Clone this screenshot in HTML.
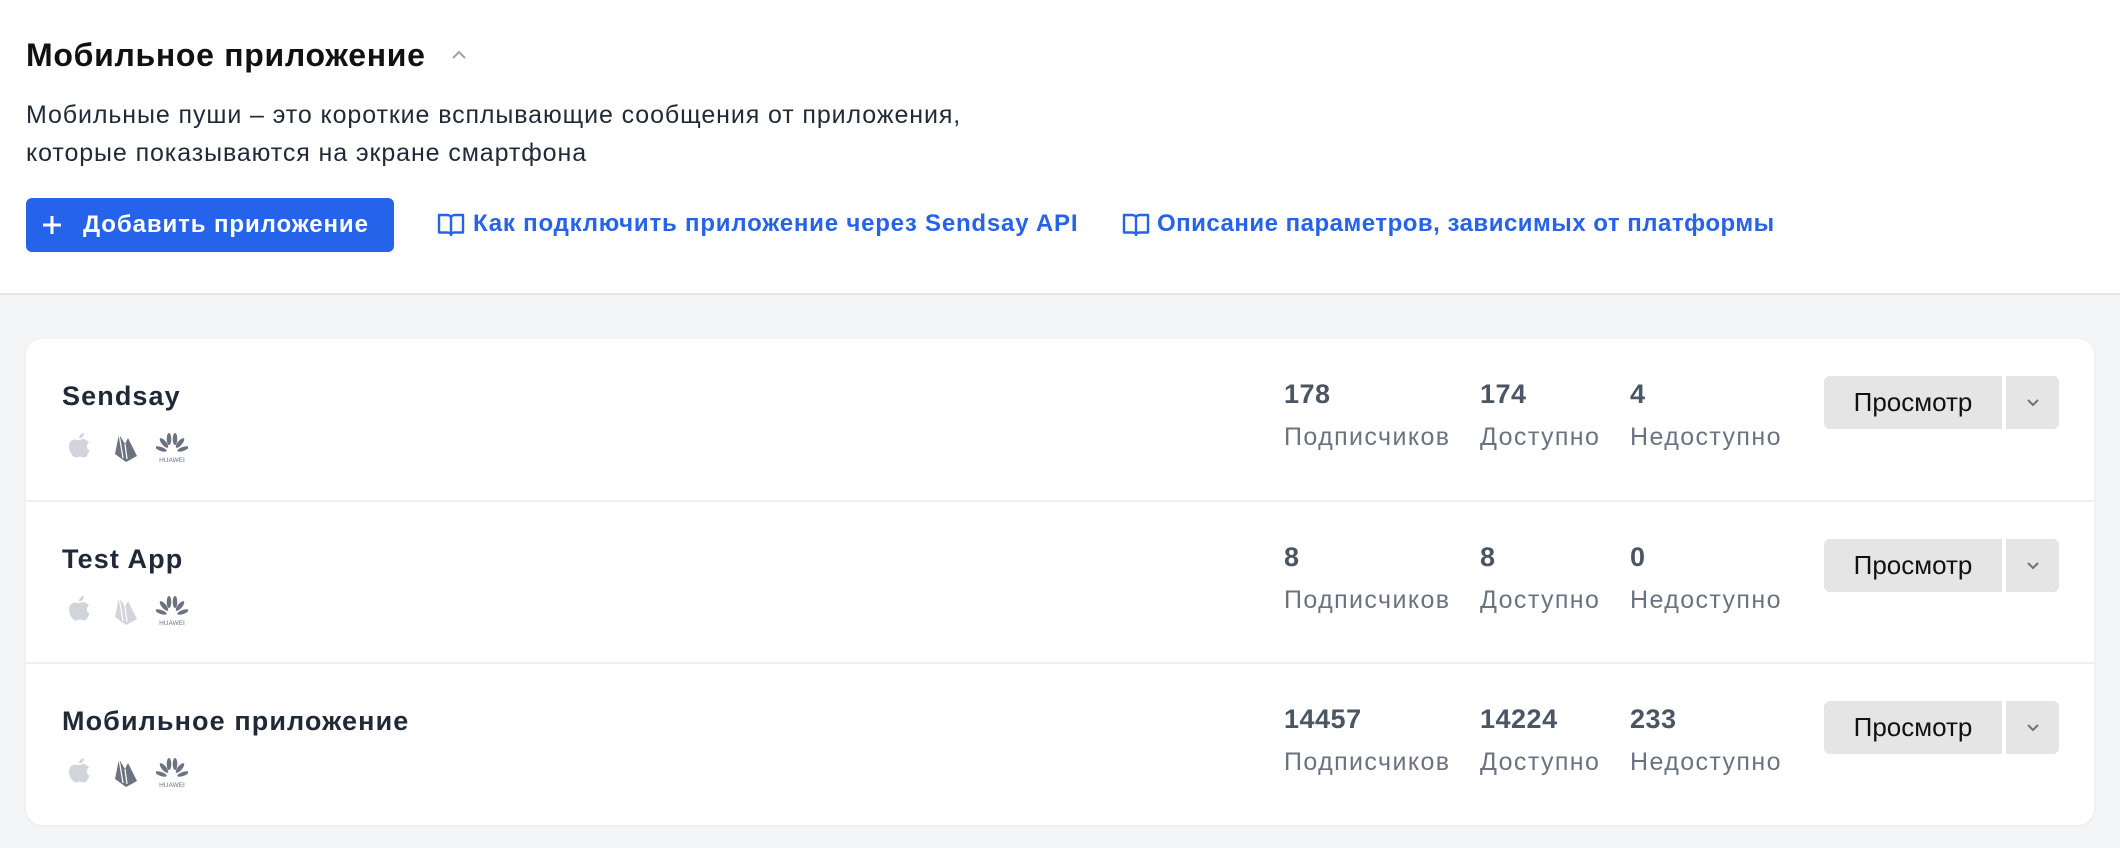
<!DOCTYPE html>
<html><head><meta charset="utf-8"><style>
*{box-sizing:border-box;margin:0;padding:0}
body{width:2120px;height:848px;background:#f4f5f7;font-family:"Liberation Sans",sans-serif;position:relative;overflow:hidden}
.top{position:absolute;left:0;top:0;width:2120px;height:295px;background:#fff;border-bottom:2px solid #e5e7eb}
.abs{position:absolute;white-space:nowrap}
h1{position:absolute;left:26px;top:37px;font-size:32px;font-weight:bold;color:#111;letter-spacing:0.7px}
.desc{left:26px;top:96px;font-size:25px;line-height:38px;color:#1f2937;letter-spacing:0.9px}
.btn{position:absolute;left:26px;top:198px;width:368px;height:54px;background:#2563eb;border-radius:6px;color:#fff;font-size:24px;font-weight:bold;display:flex;align-items:center;padding-left:57px;letter-spacing:0.9px}
.lnk{font-size:24px;font-weight:bold;color:#2563eb;top:210px}
.card{position:absolute;left:26px;top:339px;width:2068px;height:486px;background:#fff;border-radius:16px;box-shadow:0 1px 4px rgba(0,0,0,.06)}
.row{position:absolute;left:0;width:2068px;height:162px}
.row+.row{border-top:2px solid #eeeff1}
.name{position:absolute;left:36px;top:42px;font-size:27px;font-weight:bold;color:#1f2937;letter-spacing:1.1px}
.num{position:absolute;top:40px;font-size:27px;font-weight:bold;color:#4b5563;letter-spacing:0.5px}
.lab{position:absolute;top:84px;font-size:25px;color:#6b7280;letter-spacing:1.4px}
.pv{position:absolute;left:1798px;top:37px;width:178px;height:53px;background:#e5e5e5;border-radius:6px 0 0 6px;font-size:26px;color:#111;display:flex;align-items:center;justify-content:center}
.dd{position:absolute;left:1980px;top:37px;width:53px;height:53px;background:#e5e5e5;border-radius:0 6px 6px 0}
.ic{position:absolute;top:93px}
</style></head><body>
<div class="top">
<h1>Мобильное приложение</h1>
<svg class="abs" style="left:450px;top:48px" width="18" height="14" viewBox="0 0 18 14"><path d="M3 10 L9 4 L15 10" fill="none" stroke="#9ca3af" stroke-width="2"/></svg>
<div class="abs desc">Мобильные пуши – это короткие всплывающие сообщения от приложения,<br>которые показываются на экране смартфона</div>
<div class="btn"><svg style="position:absolute;left:14px;top:15px" width="24" height="24" viewBox="0 0 24 24"><path d="M12 3V21M3 12H21" stroke="#fff" stroke-width="3"/></svg>Добавить приложение</div>
<svg class="abs" style="left:437px;top:212px" width="28" height="26" viewBox="0 0 28 26"><path d="M2 3h8c2 0 4 1 4 3v17c0-1.5-1.5-2.5-3.5-2.5H2z M26 3h-8c-2 0-4 1-4 3v17c0-1.5 1.5-2.5 3.5-2.5H26z" fill="none" stroke="#2563eb" stroke-width="2.4" stroke-linejoin="round"/></svg>
<div class="abs lnk" style="left:473px;letter-spacing:0.8px">Как подключить приложение через Sendsay API</div>
<svg class="abs" style="left:1122px;top:212px" width="28" height="26" viewBox="0 0 28 26"><path d="M2 3h8c2 0 4 1 4 3v17c0-1.5-1.5-2.5-3.5-2.5H2z M26 3h-8c-2 0-4 1-4 3v17c0-1.5 1.5-2.5 3.5-2.5H26z" fill="none" stroke="#2563eb" stroke-width="2.4" stroke-linejoin="round"/></svg>
<div class="abs lnk" style="left:1157px;letter-spacing:0.5px">Описание параметров, зависимых от платформы</div>
</div>
<div class="card">
<div class="row" style="top:0">
<div class="name">Sendsay</div>
<svg class="ic" style="left:41px" width="26" height="30" viewBox="0 0 26 30"><path d="M17 1c0 3-2 5.5-5 5.5 0-3 2.5-5.5 5-5.5zM13 8c2-1 4-1.5 6 0 1.5.5 2.5 1.5 3 2.5-3 2-3 6.5.5 8-1 3-3 7-5.5 7-2 0-2.5-1-4-1s-2 1-4 1C6 25.5 2 20 2 14.5 2 10 5 7.5 8 7.5c2 0 3.5 1 5 .5z" fill="#d1d5db"/></svg>
<svg class="ic" style="left:88px" width="24" height="30" viewBox="0 0 24 30"><path d="M1 22 L5 2 L11 12 L14 6 L23 24 L12 30Z" fill="#6b7280"/><path d="M5 2 L9 26 M11 12 L13 27" stroke="#fff" stroke-width="1.2"/></svg>
<svg class="ic" style="left:130px" width="32" height="32" viewBox="0 0 32 32"><g fill="#6b7280"><ellipse cx="13" cy="7" rx="2.3" ry="6"/><ellipse cx="19" cy="7" rx="2.3" ry="6"/><ellipse cx="8" cy="11" rx="2.3" ry="6" transform="rotate(-40 8 11)"/><ellipse cx="24" cy="11" rx="2.3" ry="6" transform="rotate(40 24 11)"/><ellipse cx="5" cy="17" rx="2" ry="6" transform="rotate(-70 5 17)"/><ellipse cx="27" cy="17" rx="2" ry="6" transform="rotate(70 27 17)"/></g><text x="16" y="30" font-size="6.5" text-anchor="middle" fill="#6b7280" font-family="Liberation Sans">HUAWEI</text></svg>
<div class="num" style="left:1258px">178</div><div class="lab" style="left:1258px">Подписчиков</div>
<div class="num" style="left:1454px">174</div><div class="lab" style="left:1454px">Доступно</div>
<div class="num" style="left:1604px">4</div><div class="lab" style="left:1604px">Недоступно</div>
<div class="pv">Просмотр</div><div class="dd"><svg style="position:absolute;left:19px;top:21px" width="16" height="12" viewBox="0 0 16 12"><path d="M3 3L8 8L13 3" fill="none" stroke="#6b7280" stroke-width="2"/></svg></div>
</div>
<div class="row" style="top:161px">
<div class="name">Test App</div>
<svg class="ic" style="left:41px" width="26" height="30" viewBox="0 0 26 30"><path d="M17 1c0 3-2 5.5-5 5.5 0-3 2.5-5.5 5-5.5zM13 8c2-1 4-1.5 6 0 1.5.5 2.5 1.5 3 2.5-3 2-3 6.5.5 8-1 3-3 7-5.5 7-2 0-2.5-1-4-1s-2 1-4 1C6 25.5 2 20 2 14.5 2 10 5 7.5 8 7.5c2 0 3.5 1 5 .5z" fill="#d1d5db"/></svg>
<svg class="ic" style="left:88px" width="24" height="30" viewBox="0 0 24 30"><path d="M1 22 L5 2 L11 12 L14 6 L23 24 L12 30Z" fill="#d1d5db"/><path d="M5 2 L9 26 M11 12 L13 27" stroke="#fff" stroke-width="1.2"/></svg>
<svg class="ic" style="left:130px" width="32" height="32" viewBox="0 0 32 32"><g fill="#6b7280"><ellipse cx="13" cy="7" rx="2.3" ry="6"/><ellipse cx="19" cy="7" rx="2.3" ry="6"/><ellipse cx="8" cy="11" rx="2.3" ry="6" transform="rotate(-40 8 11)"/><ellipse cx="24" cy="11" rx="2.3" ry="6" transform="rotate(40 24 11)"/><ellipse cx="5" cy="17" rx="2" ry="6" transform="rotate(-70 5 17)"/><ellipse cx="27" cy="17" rx="2" ry="6" transform="rotate(70 27 17)"/></g><text x="16" y="30" font-size="6.5" text-anchor="middle" fill="#6b7280" font-family="Liberation Sans">HUAWEI</text></svg>
<div class="num" style="left:1258px">8</div><div class="lab" style="left:1258px">Подписчиков</div>
<div class="num" style="left:1454px">8</div><div class="lab" style="left:1454px">Доступно</div>
<div class="num" style="left:1604px">0</div><div class="lab" style="left:1604px">Недоступно</div>
<div class="pv">Просмотр</div><div class="dd"><svg style="position:absolute;left:19px;top:21px" width="16" height="12" viewBox="0 0 16 12"><path d="M3 3L8 8L13 3" fill="none" stroke="#6b7280" stroke-width="2"/></svg></div>
</div>
<div class="row" style="top:323px">
<div class="name">Мобильное приложение</div>
<svg class="ic" style="left:41px" width="26" height="30" viewBox="0 0 26 30"><path d="M17 1c0 3-2 5.5-5 5.5 0-3 2.5-5.5 5-5.5zM13 8c2-1 4-1.5 6 0 1.5.5 2.5 1.5 3 2.5-3 2-3 6.5.5 8-1 3-3 7-5.5 7-2 0-2.5-1-4-1s-2 1-4 1C6 25.5 2 20 2 14.5 2 10 5 7.5 8 7.5c2 0 3.5 1 5 .5z" fill="#d1d5db"/></svg>
<svg class="ic" style="left:88px" width="24" height="30" viewBox="0 0 24 30"><path d="M1 22 L5 2 L11 12 L14 6 L23 24 L12 30Z" fill="#6b7280"/><path d="M5 2 L9 26 M11 12 L13 27" stroke="#fff" stroke-width="1.2"/></svg>
<svg class="ic" style="left:130px" width="32" height="32" viewBox="0 0 32 32"><g fill="#6b7280"><ellipse cx="13" cy="7" rx="2.3" ry="6"/><ellipse cx="19" cy="7" rx="2.3" ry="6"/><ellipse cx="8" cy="11" rx="2.3" ry="6" transform="rotate(-40 8 11)"/><ellipse cx="24" cy="11" rx="2.3" ry="6" transform="rotate(40 24 11)"/><ellipse cx="5" cy="17" rx="2" ry="6" transform="rotate(-70 5 17)"/><ellipse cx="27" cy="17" rx="2" ry="6" transform="rotate(70 27 17)"/></g><text x="16" y="30" font-size="6.5" text-anchor="middle" fill="#6b7280" font-family="Liberation Sans">HUAWEI</text></svg>
<div class="num" style="left:1258px">14457</div><div class="lab" style="left:1258px">Подписчиков</div>
<div class="num" style="left:1454px">14224</div><div class="lab" style="left:1454px">Доступно</div>
<div class="num" style="left:1604px">233</div><div class="lab" style="left:1604px">Недоступно</div>
<div class="pv">Просмотр</div><div class="dd"><svg style="position:absolute;left:19px;top:21px" width="16" height="12" viewBox="0 0 16 12"><path d="M3 3L8 8L13 3" fill="none" stroke="#6b7280" stroke-width="2"/></svg></div>
</div>
</div>
</body></html>
